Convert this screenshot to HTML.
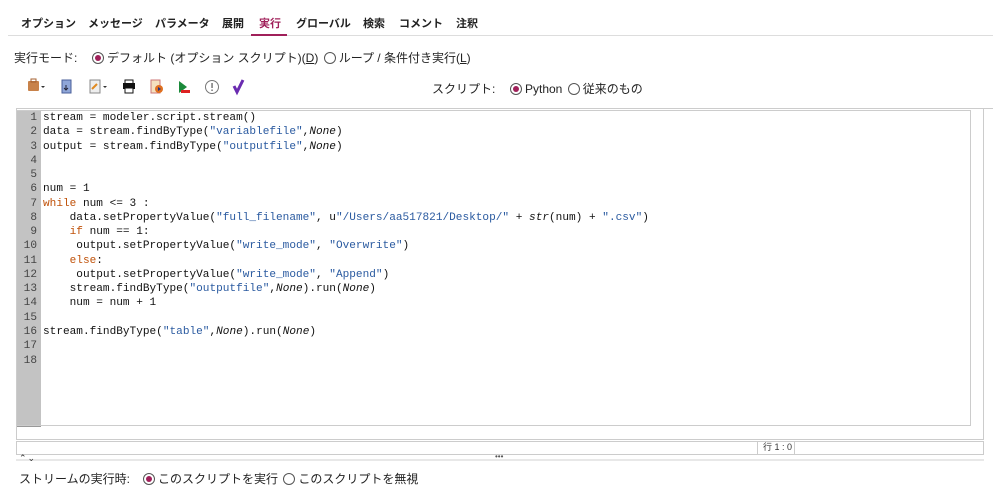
<!DOCTYPE html>
<html><head><meta charset="utf-8"><style>
*{margin:0;padding:0;box-sizing:border-box}
body{width:1000px;height:488px;background:#fff;position:relative;overflow:hidden;font-family:"Liberation Sans","Noto Sans CJK JP",sans-serif;font-size:12px;color:#222}
.abs{position:absolute}
.tab{position:absolute;top:15px;font-size:11px;font-weight:bold;color:#222}
.radio{display:inline-block;width:12px;height:12px;border:1px solid #555;border-radius:50%;vertical-align:-2px;position:relative;margin-right:3px}
.radio.on::after{content:"";position:absolute;left:2px;top:2px;width:6px;height:6px;border-radius:50%;background:#a0205a}
.code{position:absolute;left:43px;top:111px;font-family:"Liberation Mono",monospace;font-size:11.1px;line-height:14.27px;white-space:pre;color:#111}
.ln{position:absolute;left:17px;top:111px;width:24px;font-family:"Liberation Mono",monospace;font-size:11.1px;line-height:14.27px;text-align:right;padding-right:4px;color:#444;white-space:pre}
.s{color:#2a5aa0}.k{color:#c0520a}.i{font-style:italic}
</style></head><body>
<span class="tab" style="left:21px">オプション</span>
<span class="tab" style="left:88px">メッセージ</span>
<span class="tab" style="left:155px">パラメータ</span>
<span class="tab" style="left:222px">展開</span>
<span class="tab" style="left:259px;color:#a0205a">実行</span>
<span class="tab" style="left:296px">グローバル</span>
<span class="tab" style="left:363px">検索</span>
<span class="tab" style="left:399px">コメント</span>
<span class="tab" style="left:456px">注釈</span>
<div class="abs" style="left:8px;top:35px;width:985px;height:1px;background:#ddd"></div>
<div class="abs" style="left:251px;top:34px;width:36px;height:2px;background:#a0205a"></div>

<div class="abs" style="left:14px;top:49px;font-size:12px">実行モード:</div>
<div class="abs" style="left:92px;top:49px"><span class="radio on"></span>デフォルト (オプション スクリプト)(<u>D</u>) <span class="radio" style="margin-left:2px"></span>ループ / 条件付き実行(<u>L</u>)</div>

<svg class="abs" style="left:20px;top:76px" width="230" height="22">
<rect x="8" y="5" width="11" height="10" rx="1" fill="#c8824a"/><rect x="11" y="3" width="5" height="3" fill="none" stroke="#a56030"/><path d="M21 10h4l-2 2z" fill="#333"/>
<rect x="42" y="4" width="9" height="13" fill="#8fa6d8" stroke="#4a5f9a"/><path d="M46 9v5M44 12l2 2 2-2" stroke="#223" fill="none"/>
<rect x="70" y="4" width="10" height="13" fill="#eee" stroke="#888"/><path d="M72 13l5-5" stroke="#e08a20" stroke-width="2"/><path d="M83 10h4l-2 2z" fill="#333"/>
<rect x="103" y="7" width="12" height="6" fill="#111"/><rect x="105" y="4" width="8" height="4" fill="none" stroke="#111"/><rect x="105" y="12" width="8" height="5" fill="#fff" stroke="#111"/>
<rect x="131" y="4" width="9" height="13" fill="#f5e0c0" stroke="#c77"/><circle cx="139" cy="13" r="4" fill="#e07020"/><path d="M138 11l3 2-3 2z" fill="#238"/>
<path d="M159 5l8 6-8 6z" fill="#1a8a3a"/><rect x="161" y="14" width="9" height="3" fill="#d22"/>
<circle cx="192" cy="11" r="6.5" fill="none" stroke="#777"/><rect x="191.3" y="7" width="1.5" height="5" fill="#777"/><rect x="191.3" y="13.5" width="1.5" height="1.5" fill="#777"/>
<path d="M214 10l3 6 6-12" stroke="#6a2bb0" stroke-width="3" fill="none"/>
</svg>

<div class="abs" style="left:432px;top:80px">スクリプト:</div>
<div class="abs" style="left:510px;top:80px"><span class="radio on"></span>Python <span class="radio" style="margin-left:2px"></span>従来のもの</div>
<div class="abs" style="left:16px;top:108px;width:977px;height:1px;background:#ccc"></div>

<div class="abs" style="left:16px;top:109px;width:968px;height:331px;border:1px solid #ccc;border-top:none"></div>
<div class="abs" style="left:16px;top:110px;width:955px;height:316px;border:1px solid #ccc"></div>
<div class="abs" style="left:17px;top:111px;width:24px;height:314px;background:#c3c3c3"></div>
<div class="abs" style="left:17px;top:426px;width:24px;height:1px;background:#999"></div>
<div class="ln">1
2
3
4
5
6
7
8
9
10
11
12
13
14
15
16
17
18</div>
<div class="code">stream = modeler.script.stream()
data = stream.findByType(<span class="s">"variablefile"</span>,<span class="i">None</span>)
output = stream.findByType(<span class="s">"outputfile"</span>,<span class="i">None</span>)


num = 1
<span class="k">while</span> num &lt;= 3 :
    data.setPropertyValue(<span class="s">"full_filename"</span>, u<span class="s">"/Users/aa517821/Desktop/"</span> + <span class="i">str</span>(num) + <span class="s">".csv"</span>)
    <span class="k">if</span> num == 1:
     output.setPropertyValue(<span class="s">"write_mode"</span>, <span class="s">"Overwrite"</span>)
    <span class="k">else</span>:
     output.setPropertyValue(<span class="s">"write_mode"</span>, <span class="s">"Append"</span>)
    stream.findByType(<span class="s">"outputfile"</span>,<span class="i">None</span>).run(<span class="i">None</span>)
    num = num + 1

stream.findByType(<span class="s">"table"</span>,<span class="i">None</span>).run(<span class="i">None</span>)

</div>

<div class="abs" style="left:16px;top:441px;width:968px;height:14px;border:1px solid #ccc;background:#fff"></div>
<div class="abs" style="left:757px;top:441px;width:38px;height:14px;border-left:1px solid #ccc;border-right:1px solid #ccc;font-size:9px;line-height:13px;padding-left:5px;color:#333">行 1 : 0</div>
<div class="abs" style="left:16px;top:459px;width:968px;height:2px;background:#e8e8e8"></div>
<div class="abs" style="left:19px;top:453px;font-size:9px;color:#333;letter-spacing:1px">⌃⌄</div>
<div class="abs" style="left:495px;top:452px;font-size:8px;color:#555">•••</div>

<div class="abs" style="left:19px;top:470px">ストリームの実行時:</div>
<div class="abs" style="left:143px;top:470px"><span class="radio on"></span>このスクリプトを実行 <span class="radio" style="margin-left:2px"></span>このスクリプトを無視</div>
</body></html>
